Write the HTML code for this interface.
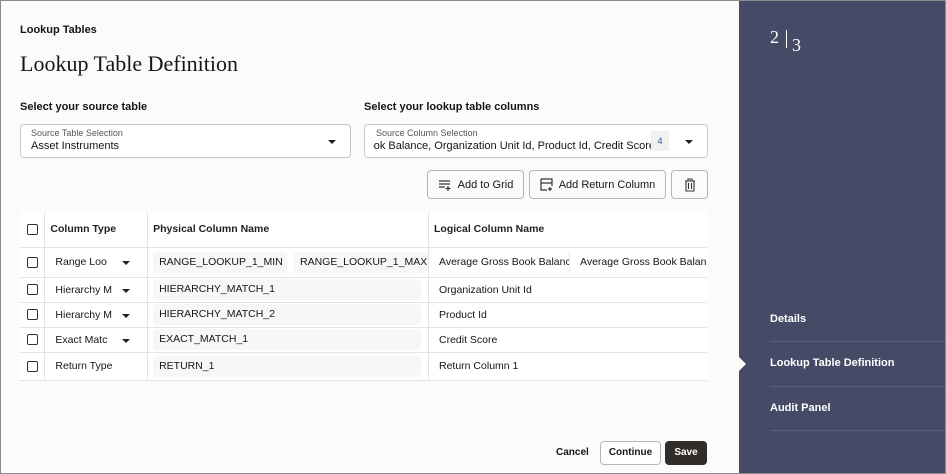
<!DOCTYPE html>
<html><head><style>
*{box-sizing:border-box;margin:0;padding:0}
body{width:946px;height:474px;overflow:hidden;font-family:"Liberation Sans",sans-serif;background:#fcfbfa;color:#161513;position:relative;font-size:11px}
.frame{position:absolute;inset:0;border:1px solid #8a8a8a;z-index:10;pointer-events:none}
.abs{position:absolute}
.panel{position:absolute;left:739px;top:0;width:207px;height:474px;background:#454b66;color:#fff}
.sel{position:absolute;top:124px;height:34px;border:1px solid #c8c6c2;border-radius:4px;background:#fff;padding:3px 10px}
.sel .l{font-size:9px;color:#555}
.sel .v{font-size:11px;margin-top:2px;white-space:nowrap;overflow:hidden}
.caret{position:absolute;width:0;height:0;border-left:4px solid transparent;border-right:4px solid transparent;border-top:4px solid #222}
.btn{position:absolute;top:170px;height:29px;border:1px solid #b8b6b2;border-radius:4px;background:#fcfbfa;font-size:11px;display:flex;align-items:center;justify-content:center;gap:6px}
table{position:absolute;left:20px;top:212px;width:687px;border-collapse:collapse;background:#fff}
td{border-bottom:1px solid #e6e4e1;font-size:10.5px;white-space:nowrap;overflow:hidden;padding:0}
.cb{display:inline-block;width:11px;height:11px;border:1.3px solid #333;border-radius:2px;vertical-align:middle}
.pill{display:inline-block;background:#f8f7f5;border-radius:3px;padding:0 6px;height:21px;line-height:21px;overflow:hidden;vertical-align:middle}
.sb{font-size:11px;font-weight:bold;position:absolute;left:31px}
.ln{position:absolute;left:31px;right:0;height:1px;background:#5a6078}
.h td{font-weight:600;color:#222}
</style></head><body>
<div class="frame"></div>
<div class="abs" style="left:20px;top:24px;font-size:11px;font-weight:bold">Lookup Tables</div>
<div class="abs" style="left:20px;top:51px;font-family:'Liberation Serif',serif;font-size:22px">Lookup Table Definition</div>
<div class="abs" style="left:20px;top:101px;font-size:11px;font-weight:bold">Select your source table</div>
<div class="abs" style="left:364px;top:101px;font-size:11px;font-weight:bold">Select your lookup table columns</div>
<div class="sel" style="left:20px;width:331px"><div class="l">Source Table Selection</div><div class="v">Asset Instruments</div><div class="caret" style="right:14px;top:15px"></div></div>
<div class="sel" style="left:364px;width:344px;padding-left:8px"><div class="l" style="padding-left:3px">Source Column Selection</div><div class="v" style="width:282px;direction:rtl;text-align:left">Average Gross Book Balance, Organization Unit Id, Product Id, Credit Score</div><div class="abs" style="left:286px;top:6px;width:18px;height:20px;background:#f1f0ee;color:#2e5a99;font-size:9px;text-align:center;line-height:20px">4</div><div class="caret" style="right:14px;top:15px"></div></div>
<div class="btn" style="left:427px;width:97px"><svg width="14" height="12" viewBox="0 0 14 12" fill="none" stroke="#333" stroke-width="1.2"><path d="M1 2h11M1 5h11M1 8h6M10 7v5M7.5 9.5h5"/></svg>Add to Grid</div>
<div class="btn" style="left:529px;width:137px"><svg width="13" height="13" viewBox="0 0 13 13" fill="none" stroke="#333" stroke-width="1.2"><path d="M1 1h11v7M1 1v11h6M1 5h11M10 9v4M8 11h4"/></svg>Add Return Column</div>
<div class="btn" style="left:671px;width:37px"><svg width="12" height="14" viewBox="0 0 12 14" fill="none" stroke="#333" stroke-width="1.1"><path d="M1 3h10M4 3V1h4v2M2 3v10h8V3M4.5 5v6M7.5 5v6"/></svg></div>
<table>
<tr class="h" style="height:35px"><td style="width:25px;padding-left:7px"><span class="cb"></span></td><td style="width:103px;padding-left:5px;border-left:1px solid #e6e4e1">Column Type</td><td style="width:280px;padding-left:5px;border-left:1px solid #e6e4e1">Physical Column Name</td><td style="padding-left:5px;border-left:1px solid #e6e4e1">Logical Column Name</td></tr>
<tr style="height:30px"><td style="padding-left:7px"><span class="cb"></span></td><td style="padding-left:10px;border-left:1px solid #e6e4e1;position:relative">Range Loo<span class="caret" style="left:77px;top:13px"></span></td><td style="padding-left:5px;border-left:1px solid #e6e4e1"><span class="pill" style="width:134px">RANGE_LOOKUP_1_MIN</span> <span class="pill" style="width:134px;margin-left:4px">RANGE_LOOKUP_1_MAX</span></td><td style="padding-left:10px;border-left:1px solid #e6e4e1"><span style="display:inline-block;width:130px;overflow:hidden;vertical-align:middle">Average Gross Book Balance</span><span style="display:inline-block;border-left:1px solid #e6e4e1;height:21px;line-height:21px;padding-left:10px;width:138px;overflow:hidden;vertical-align:middle">Average Gross Book Balance</span></td></tr>
<tr style="height:25px"><td style="padding-left:7px"><span class="cb"></span></td><td style="padding-left:10px;border-left:1px solid #e6e4e1;position:relative">Hierarchy M<span class="caret" style="left:77px;top:11px"></span></td><td style="padding-left:5px;border-left:1px solid #e6e4e1"><span class="pill" style="width:268px">HIERARCHY_MATCH_1</span></td><td style="padding-left:10px;border-left:1px solid #e6e4e1">Organization Unit Id</td></tr>
<tr style="height:25px"><td style="padding-left:7px"><span class="cb"></span></td><td style="padding-left:10px;border-left:1px solid #e6e4e1;position:relative">Hierarchy M<span class="caret" style="left:77px;top:11px"></span></td><td style="padding-left:5px;border-left:1px solid #e6e4e1"><span class="pill" style="width:268px">HIERARCHY_MATCH_2</span></td><td style="padding-left:10px;border-left:1px solid #e6e4e1">Product Id</td></tr>
<tr style="height:25px"><td style="padding-left:7px"><span class="cb"></span></td><td style="padding-left:10px;border-left:1px solid #e6e4e1;position:relative">Exact Matc<span class="caret" style="left:77px;top:11px"></span></td><td style="padding-left:5px;border-left:1px solid #e6e4e1"><span class="pill" style="width:268px">EXACT_MATCH_1</span></td><td style="padding-left:10px;border-left:1px solid #e6e4e1">Credit Score</td></tr>
<tr style="height:28px"><td style="padding-left:7px"><span class="cb"></span></td><td style="padding-left:10px;border-left:1px solid #e6e4e1">Return Type</td><td style="padding-left:5px;border-left:1px solid #e6e4e1"><span class="pill" style="width:268px">RETURN_1</span></td><td style="padding-left:10px;border-left:1px solid #e6e4e1">Return Column 1</td></tr>
</table>
<div class="abs" style="left:556px;top:447px;font-size:10px;font-weight:bold">Cancel</div>
<div class="abs" style="left:600px;top:441px;width:61px;height:24px;border:1px solid #b8b6b2;border-radius:4px;background:#fff;font-size:10px;font-weight:bold;text-align:center;line-height:22px">Continue</div>
<div class="abs" style="left:665px;top:441px;width:42px;height:24px;border-radius:4px;background:#312d2a;color:#fff;font-size:10px;font-weight:bold;text-align:center;line-height:24px">Save</div>
<div class="panel">
<div class="abs" style="left:31px;top:27px;font-family:'Liberation Serif',serif;font-size:18px">2</div>
<div class="abs" style="left:47px;top:30px;width:1px;height:18px;background:#fff"></div>
<div class="abs" style="left:53px;top:35px;font-family:'Liberation Serif',serif;font-size:18px">3</div>
<div class="sb" style="top:313px">Details</div>
<div class="ln" style="top:341px"></div>
<div class="sb" style="top:357px">Lookup Table Definition</div>
<div class="ln" style="top:386px"></div>
<div class="sb" style="top:402px">Audit Panel</div>
<div class="ln" style="top:430px"></div>
<div class="abs" style="left:0;top:357px;width:0;height:0;border-top:7px solid transparent;border-bottom:7px solid transparent;border-left:7px solid #fcfbfa"></div>
</div>
</body></html>
